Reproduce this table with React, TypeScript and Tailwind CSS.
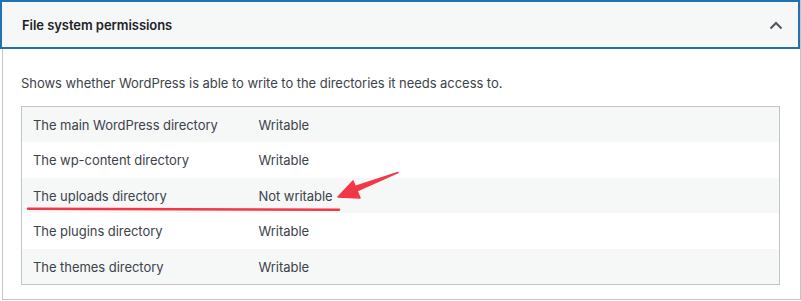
const rows = [
  { name: 'The main WordPress directory', status: 'Writable' },
  { name: 'The wp-content directory', status: 'Writable' },
  { name: 'The uploads directory', status: 'Not writable' },
  { name: 'The plugins directory', status: 'Writable' },
  { name: 'The themes directory', status: 'Writable' },
];

export default function App() {
  return (
    <div
      className="relative w-[801px] h-[301px] bg-white overflow-hidden"
      style={{ fontFamily: "Inter, 'Noto Sans', sans-serif" }}
    >
      {/* Accordion panel */}
      <div className="ml-[2px] w-[799px] h-[300px] border border-t-0 border-[#c3c4c7] flex flex-col">
        <button className="-ml-[3px] w-[800px] h-[49px] shrink-0 border-2 border-[#2271b1] bg-[#f6f7f7] flex items-center justify-between pl-[20px] pr-[15px] text-left">
          <span className="mt-[2px] text-[13px] font-semibold text-[#1d2327] tracking-[-0.05px]">File system permissions</span>
          <svg width="14" height="9" viewBox="0 0 14 9" className="mt-[1px]">
            <polyline points="1.5,7.5 7,2 12.5,7.5" fill="none" stroke="#50575e" strokeWidth="2" />
          </svg>
        </button>

        <div className="pl-[18px] pr-[20px]">
          <p className="mt-[24px] text-[13px] text-[#3c434a] leading-[20px] tracking-[-0.05px]">
            Shows whether WordPress is able to write to the directories it needs access to.
          </p>

          <table className="mt-[13px] w-[759px] border border-[#c3c4c7] border-collapse text-[13px] text-[#3c434a] tracking-[-0.05px]">
            <tbody>
              {rows.map((row, i) => (
                <tr key={row.name} className={i % 2 === 0 ? 'bg-[#f6f7f7] h-[35.6px]' : 'bg-white h-[35.6px]'}>
                  <td className="w-[237px] pl-[11px] pt-[2px] align-middle">{row.name}</td>
                  <td className="pt-[2px] align-middle">{row.status}</td>
                </tr>
              ))}
            </tbody>
          </table>
        </div>
      </div>

      {/* Red annotation: underline + arrow */}
      <svg className="absolute left-0 top-0 pointer-events-none" width="801" height="301">
        <path d="M28 208.8 Q180 209.6 339 209.8" stroke="#f23847" strokeWidth="2.6" strokeLinecap="round" fill="none" />
        <path d="M398 172.5 L355 186.5 L356.5 191 Z" fill="#f23847" stroke="#f23847" strokeWidth="1.6" strokeLinejoin="round" />
        <path d="M338 197 L353 181 L360 198 Z" fill="#f23847" stroke="#f23847" strokeWidth="1.5" strokeLinejoin="round" />
      </svg>
    </div>
  );
}
